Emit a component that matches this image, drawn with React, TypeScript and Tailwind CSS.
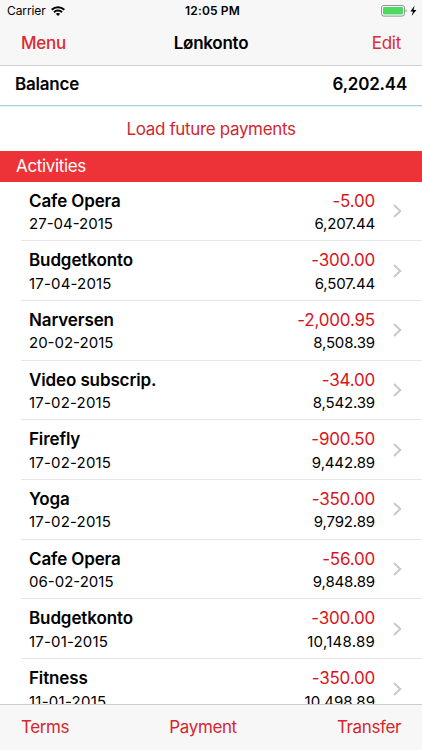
type Activity = { name: string; date: string; amount: string; balance: string };

const activities: Activity[] = [
  { name: "Cafe Opera", date: "27-04-2015", amount: "-5.00", balance: "6,207.44" },
  { name: "Budgetkonto", date: "17-04-2015", amount: "-300.00", balance: "6,507.44" },
  { name: "Narversen", date: "20-02-2015", amount: "-2,000.95", balance: "8,508.39" },
  { name: "Video subscrip.", date: "17-02-2015", amount: "-34.00", balance: "8,542.39" },
  { name: "Firefly", date: "17-02-2015", amount: "-900.50", balance: "9,442.89" },
  { name: "Yoga", date: "17-02-2015", amount: "-350.00", balance: "9,792.89" },
  { name: "Cafe Opera", date: "06-02-2015", amount: "-56.00", balance: "9,848.89" },
  { name: "Budgetkonto", date: "17-01-2015", amount: "-300.00", balance: "10,148.89" },
  { name: "Fitness", date: "11-01-2015", amount: "-350.00", balance: "10,498.89" },
];

function WifiIcon() {
  return (
    <svg className="ml-[5px] h-[10px] w-[14px]" viewBox="0 0 14 10" fill="none" stroke="#000" strokeWidth="2">
      <path d="M0.7 3.7C4.2 0.3 9.8 0.3 13.3 3.7" />
      <path d="M3 6.2C5.2 4 8.8 4 11 6.2" />
      <path d="M7 10L4.8 7.7C6 6.6 8 6.6 9.2 7.7Z" fill="#000" stroke="none" />
    </svg>
  );
}

function BatteryIcon() {
  return (
    <svg className="h-[12px] w-[37px]" viewBox="0 0 37 12">
      <rect x="0.5" y="0.5" width="23" height="10.6" rx="2.4" fill="#fff" stroke="#929292" />
      <rect x="2" y="2" width="20" height="7.6" rx="1" fill="#4cd964" />
      <path d="M24.7 4C26 4.4 26 7.2 24.7 7.6Z" fill="#929292" />
      <path d="M33.6 0.6L29.4 6.4H32L30.6 11L35.4 4.9H32.5Z" fill="#000" />
    </svg>
  );
}

// Figures with a narrow "1" get a little more room so that the columns stay even.
function dateTracking(date: string) {
  if (date.startsWith("11")) return "tracking-[0.25px]";
  return date.startsWith("1") ? "tracking-[0.18px]" : "tracking-[0px]";
}

function balanceTracking(balance: string) {
  if (balance === "10,148.89") return "tracking-[0.25px]";
  return balance.startsWith("1") ? "tracking-[0.05px]" : "tracking-[-0.15px]";
}

function Row({ name, date, amount, balance }: Activity) {
  return (
    <li className="ml-[21px] flex h-[59.7px] shrink-0 border-b border-b-[#e6e6e8] pl-2">
      <div className="flex flex-1 flex-col pt-[8px]">
        <span className="text-[17px] leading-[22px] font-semibold tracking-[-0.12px]">{name}</span>
        <span className={`mt-[1.5px] text-[15px] leading-[22px] ${dateTracking(date)}`}>{date}</span>
      </div>
      <div className="flex flex-col items-end pt-[8px]">
        <span className="text-[17px] leading-[22px] tracking-[-0.2px] text-[#d9141c]">{amount}</span>
        <span className={`mt-[1.5px] text-[15px] leading-[22px] ${balanceTracking(balance)}`}>{balance}</span>
      </div>
      <svg className="mt-[22.5px] mr-[20px] ml-[18px] h-[14px] w-[9px]" viewBox="0 0 9 14" fill="none" stroke="#c7c7cc" strokeWidth="1.9">
        <path d="M1 1L7.3 7L1 13" />
      </svg>
    </li>
  );
}

export default function App() {
  return (
    <div className="flex h-[750px] w-[422px] flex-col overflow-hidden bg-white font-['Inter',sans-serif] text-black">
      <header className="h-[66px] shrink-0 border-b border-b-[#d2d2d4] bg-[#f7f7f7]">
        <div className="grid h-[22px] grid-cols-3 items-center pr-[4px] pl-[7px] text-[12px]">
          <div className="flex items-center">
            <span className="tracking-[-0.1px]">Carrier</span>
            <WifiIcon />
          </div>
          <span className="text-center font-semibold tracking-[0.15px]">12:05 PM</span>
          <div className="flex justify-end">
            <BatteryIcon />
          </div>
        </div>
        <nav className="grid h-[43px] grid-cols-3 items-center px-[21px] text-[17px] tracking-[-0.25px]">
          <button className="text-left font-medium text-[#dc2a30]">Menu</button>
          <h1 className="text-center font-semibold">Lønkonto</h1>
          <button className="text-right text-[#dc2a30]">Edit</button>
        </nav>
      </header>
      <div className="flex h-[40px] shrink-0 items-center justify-between border-b border-b-[#a9cdea] px-[15px] pb-[2px] text-[17px] font-semibold tracking-[-0.22px] shadow-[0_1px_0_#e6f3fb]">
        <span>Balance</span>
        <span>6,202.44</span>
      </div>
      <button className="h-[45px] shrink-0 pt-[2px] text-[17px] tracking-[-0.35px] text-[#d3272f]">Load future payments</button>
      <h2 className="flex h-[30.5px] shrink-0 items-center bg-[#ee3338] pl-4 text-[17px] tracking-[-0.35px] text-white">Activities</h2>
      <ul className="flex min-h-0 flex-1 flex-col overflow-hidden">
        {activities.map((a) => (
          <Row key={a.date + a.name} {...a} />
        ))}
      </ul>
      <footer className="flex h-[46px] shrink-0 items-center justify-between border-t border-t-[#cfcfd1] bg-[#f7f7f7] px-[21px] text-[17px] tracking-[-0.38px] text-[#d3272f]">
        <button>Terms</button>
        <button>Payment</button>
        <button>Transfer</button>
      </footer>
    </div>
  );
}
